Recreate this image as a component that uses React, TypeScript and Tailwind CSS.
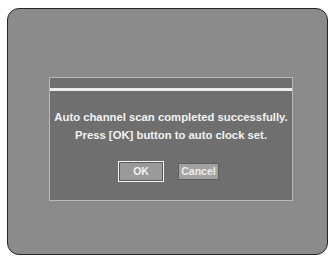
export default function App() {
  return (
    <div className="w-[331px] h-[256px] bg-white pt-[8px] pl-[7px]">
      {/* Screen frame */}
      <div className="w-[321px] h-[247px] rounded-[12px] border-[1.5px] border-[#262626] bg-[#8b8b8b] pt-[68px] pl-[41px]">
        {/* Dialog */}
        <div className="w-[244px] h-[124px] border border-[#b8b8b8] bg-[#6f6f6f] font-['Liberation_Sans',Arial,sans-serif] font-bold text-[#f2f2f2]">
          <div className="h-[10px]" />
          <div className="h-[3px] bg-[#ededed]" />
          <div className="pt-[17px] text-center text-[11.3px] leading-[18px]">
            <p>Auto channel scan completed successfully.</p>
            <p>Press [OK] button to auto clock set.</p>
          </div>
          <div className="flex items-center gap-[14px] pl-[68px] pt-[17px]">
            <div className="w-[46px] h-[21px] border border-[#f4f4f4] outline outline-1 -outline-offset-2 outline-[#5a5a5a] bg-[#9a9a9a] flex items-center justify-center text-[10.5px] text-[#f2f2f2]">
              OK
            </div>
            <div className="w-[41px] h-[17px] border border-[#5e5e5e] bg-[#a2a2a2] flex items-center justify-center text-[10.5px] text-[#ececec]">
              Cancel
            </div>
          </div>
        </div>
      </div>
    </div>
  )
}
